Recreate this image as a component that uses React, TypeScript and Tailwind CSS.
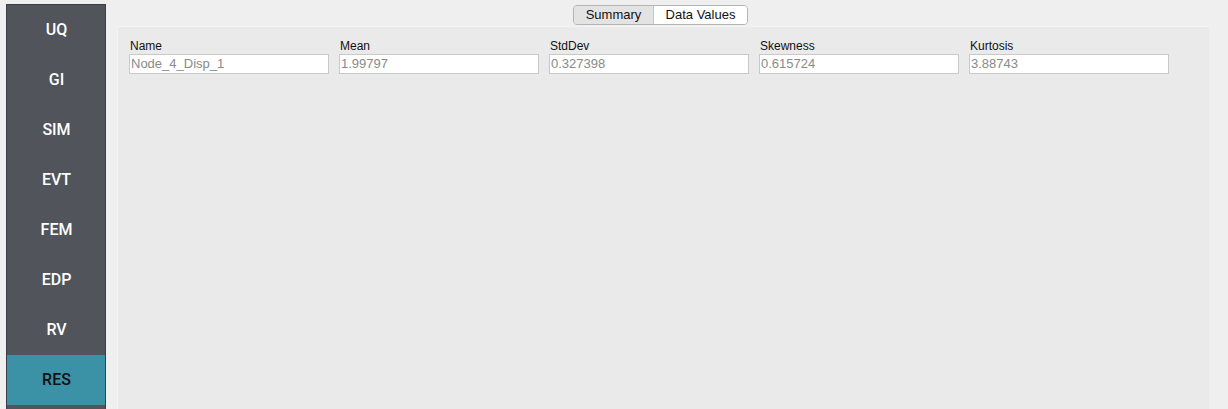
import React from "react";

const items = ["UQ", "GI", "SIM", "EVT", "FEM", "EDP", "RV", "RES"];
const fields = [
  ["Name", "Node_4_Disp_1"],
  ["Mean", "1.99797"],
  ["StdDev", "0.327398"],
  ["Skewness", "0.615724"],
  ["Kurtosis", "3.88743"],
];

export default function App() {
  return (
    <div
      className="flex h-[409px] w-[1228px] overflow-hidden bg-[#efefef]"
      style={{ fontFamily: '"Liberation Sans", Arial, sans-serif' }}
    >
      <div className="ml-[6px] mt-[4px] flex h-[420px] w-[100px] flex-col border border-[#3b3e44] bg-[#51545a]">
        {items.map((it) => (
          <div
            key={it}
            className={
              it === "RES"
                ? "flex h-[50px] shrink-0 items-center justify-center bg-[#3b92a7] pl-[1px] font-['Roboto',sans-serif] text-[16px] font-medium text-[#111]"
                : "flex h-[50px] shrink-0 items-center justify-center pl-[1px] font-['Roboto',sans-serif] text-[16px] font-medium text-white"
            }
          >
            {it}
          </div>
        ))}
      </div>
      <div className="ml-[11px] mr-[19px] flex flex-1 flex-col">
        <div className="flex h-[26px] justify-center pr-[5px] pt-[5px]">
          <div className="flex h-[20px] overflow-hidden rounded-[4px] border border-[#b4b4b4] text-[13px] text-[#111]">
            <div className="flex w-[80px] items-center justify-center border-r border-[#c8c8c8] bg-[#e3e3e3]">Summary</div>
            <div className="flex w-[93px] items-center justify-center bg-white">Data Values</div>
          </div>
        </div>
        <div className="flex-1 border-l border-t border-[#f4f4f4] bg-[#eaeaea] pl-[11px] pt-[11px]">
          <div className="flex gap-[10px]">
            {fields.map(([l, v]) => (
              <div key={l} className="flex w-[200px] flex-col">
                <div className="h-[16px] pl-[1px] text-[12px] leading-[16px] text-[#111]">{l}</div>
                <div className="flex h-[20px] items-center border border-[#c9c9c9] bg-white pl-[1px] text-[13px] text-[#8a8a8a]">
                  {v}
                </div>
              </div>
            ))}
          </div>
        </div>
      </div>
    </div>
  );
}
